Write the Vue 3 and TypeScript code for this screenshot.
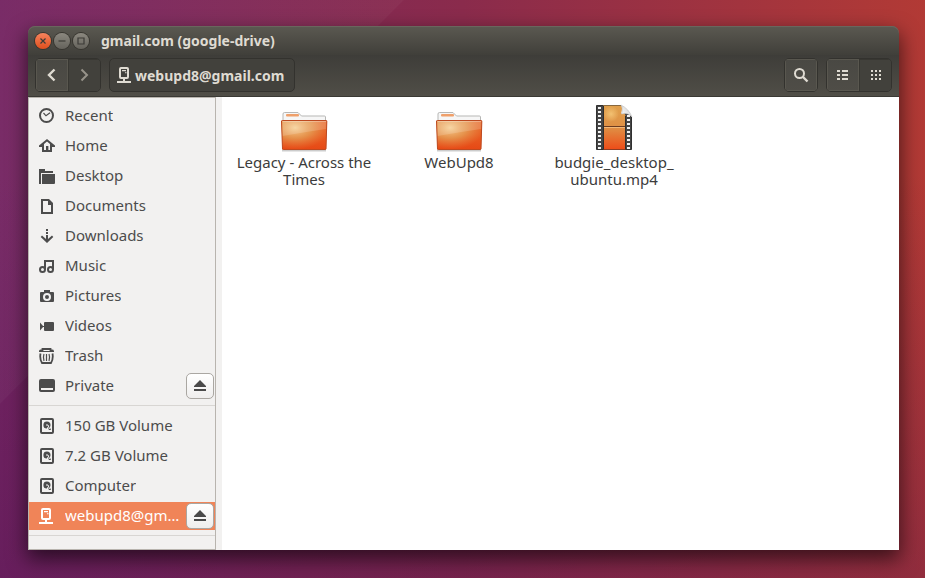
<script setup lang="ts">
import { ref } from 'vue'

interface Place {
  label: string
  icon: string
  ejectable?: boolean
}

interface FileItem {
  name: string
  lines: string[]
  kind: 'folder' | 'video'
}

const bookmarks: Place[] = [
  { label: 'Recent', icon: 'recent' },
  { label: 'Home', icon: 'home' },
  { label: 'Desktop', icon: 'desktop' },
  { label: 'Documents', icon: 'documents' },
  { label: 'Downloads', icon: 'downloads' },
  { label: 'Music', icon: 'music' },
  { label: 'Pictures', icon: 'pictures' },
  { label: 'Videos', icon: 'videos' },
  { label: 'Trash', icon: 'trash' },
  { label: 'Private', icon: 'drive', ejectable: true },
]

const devices: Place[] = [
  { label: '150 GB Volume', icon: 'disk' },
  { label: '7.2 GB Volume', icon: 'disk' },
  { label: 'Computer', icon: 'disk' },
  { label: 'webupd8@gmail.com', icon: 'server', ejectable: true },
]

const groups = [bookmarks, devices]

const files: FileItem[] = [
  { name: 'legacy', lines: ['Legacy - Across the', 'Times'], kind: 'folder' },
  { name: 'webupd8', lines: ['WebUpd8'], kind: 'folder' },
  { name: 'budgie', lines: ['budgie_desktop_', 'ubuntu.mp4'], kind: 'video' },
]

const current = ref('webupd8@gmail.com')
const sprockets = Array.from({ length: 11 }, (_, i) => 3 + i * 4)
</script>

<template>
  <div class="desktop">
    <svg class="symbols" aria-hidden="true">
      <symbol id="recent" viewBox="0 0 16 16">
        <circle cx="7.5" cy="7.5" r="6.5" fill="none" stroke="currentColor" stroke-width="2" />
        <path d="M4.5 5 7 7.8 11 4.8" fill="none" stroke="currentColor" stroke-width="1.2" />
      </symbol>
      <symbol id="home" viewBox="0 0 16 16">
        <path d="M8 1 16 7.5V9H13V14H3V9H0V7.5ZM8 3.600 5 6V12H7V8H9.500V12H11V6Z" fill="currentColor" fill-rule="evenodd" />
        <path d="M7 8H9.500V13H7Z" fill="currentColor" />
        <path d="M5 7H7V12H5ZM9.500 7H11V12H9.500ZM7 6H9.500V8H7Z" fill="#f2f1f0" />
      </symbol>
      <symbol id="desktop" viewBox="0 0 16 16">
        <path d="M0 1H6V3H14V5H2V16H0ZM3 6H16V15Q16 16 15 16H3Z" fill="currentColor" />
      </symbol>
      <symbol id="documents" viewBox="0 0 16 16">
        <path d="M2 1H10L14 5V16H2ZM4 3V14H12V7H9V3Z" fill="currentColor" fill-rule="evenodd" />
      </symbol>
      <symbol id="downloads" viewBox="0 0 16 16">
        <path d="M7 1H9V3H7ZM7 4H9V6H7ZM7 7H9V11L13 7.500 14.300 9 8 15 1.700 9 3 7.500 7 11Z" fill="currentColor" />
      </symbol>
      <symbol id="music" viewBox="0 0 16 16">
        <path d="M6 11.500V3H14V11.500" fill="none" stroke="currentColor" stroke-width="2" />
        <circle cx="3.500" cy="11.500" r="2.500" fill="none" stroke="currentColor" stroke-width="2" />
        <circle cx="11.500" cy="11.500" r="2.500" fill="none" stroke="currentColor" stroke-width="2" />
      </symbol>
      <symbol id="pictures" viewBox="0 0 16 16">
        <path d="M2 4H5V2H11V4H14Q15 4 15 5V13Q15 14 14 14H2Q1 14 1 13V5Q1 4 2 4ZM8 5A4 4 0 0 0 8 13A4 4 0 0 0 8 5ZM8 7A2 2 0 0 1 8 11A2 2 0 0 1 8 7Z" fill="currentColor" fill-rule="evenodd" />
      </symbol>
      <symbol id="videos" viewBox="0 0 16 16">
        <path d="M1 4.500 4.500 8.500 1 12.500ZM5 5Q5 4 6 4H14Q15 4 15 5V12Q15 13 14 13H6Q5 13 5 12V9H4V8H5Z" fill="currentColor" />
      </symbol>
      <symbol id="trash" viewBox="0 0 16 16">
        <path d="M1 4V3Q1 2.500 2 2.500H3.500V1H11.500V2.500H13Q14 2.500 14 3V4M1.500 5.500Q.5 11 3 15H12Q14.500 11 13.500 5.500" fill="none" stroke="currentColor" stroke-width="1.800" />
        <path d="M0 3.500H15M5 6Q3.800 9 5 13M10 6Q11.200 9 10 13M7.500 6V13" fill="none" stroke="currentColor" stroke-width="1.200" />
      </symbol>
      <symbol id="drive" viewBox="0 0 16 16">
        <path d="M2 1H14Q16 1 16 3V12Q16 14 14 14H2Q0 14 0 12V3Q0 1 2 1ZM2 10V12H14V10Z" fill="currentColor" fill-rule="evenodd" />
      </symbol>
      <symbol id="disk" viewBox="0 0 16 16">
        <rect x="2" y="1" width="12" height="14" rx="1" fill="none" stroke="currentColor" stroke-width="2" />
        <path d="M8 3.500A3.500 3.500 0 0 1 11.500 7Q11.500 8.500 10.800 9.200L12 12H10L8.500 8.800 7.800 10.500A3.500 3.500 0 0 1 8 3.500Z" fill="currentColor" />
        <path d="M7 7H9L10.500 11" fill="none" stroke="#f2f1f0" stroke-width="1" />
      </symbol>
      <symbol id="server" viewBox="0 0 16 16">
        <rect x="3" y="1" width="8" height="10" rx="1" fill="none" stroke="currentColor" stroke-width="2" />
        <path d="M5 3H9V4.200H5ZM8 5.200H9.500V6.200H8ZM6 11H8V14H14V16H0V14H6Z" fill="currentColor" />
      </symbol>
      <symbol id="eject" viewBox="0 0 12 12">
        <path d="M6 0 12 6V7H0V6ZM0 9H12V11H0Z" fill="currentColor" />
      </symbol>
      <linearGradient id="folder-front" x1="0" y1="0" x2="0" y2="1">
        <stop offset="0" stop-color="#dd8a48" />
        <stop offset=".5" stop-color="#e06d2c" />
        <stop offset="1" stop-color="#dc4412" />
      </linearGradient>
      <radialGradient id="folder-glow" cx=".3" cy=".25" r=".75">
        <stop offset="0" stop-color="#f6cf94" />
        <stop offset=".5" stop-color="#e8a057" stop-opacity=".7" />
        <stop offset="1" stop-color="#f04d18" stop-opacity=".5" />
      </radialGradient>
      <linearGradient id="film-frame" x1="0" y1="0" x2="0" y2="1">
        <stop offset="0" stop-color="#e0a04c" />
        <stop offset=".5" stop-color="#df9045" />
        <stop offset="1" stop-color="#ee4c18" />
      </linearGradient>
      <radialGradient id="film-glow">
        <stop offset="0" stop-color="#fbd283" stop-opacity=".7" />
        <stop offset="1" stop-color="#fbd283" stop-opacity="0" />
      </radialGradient>
      <linearGradient id="page-curl" x1="0" y1="1" x2="1" y2="0">
        <stop offset="0" stop-color="#ffffff" />
        <stop offset="1" stop-color="#c9c9c9" />
      </linearGradient>
      <symbol id="folder" viewBox="0 0 48 48">
        <path d="M3 18V10Q3 8.500 4.500 8.500H18L21.500 12H44.500Q45.500 12 45.500 13V18" fill="#f6f6f6" stroke="#b7b7b5" />
        <rect x="6" y="10" width="13" height="2.500" rx="1" fill="#efa06b" />
        <path d="M2 46.500H46" stroke="#000000" stroke-opacity=".2" stroke-width="2" />
        <path d="M1.500 17Q1.500 16.500 2.500 16.500H46Q47 16.500 46.800 17.500L46 45Q46 45.500 45 45.500H3.500Q2.500 45.500 2.500 45Z" fill="url(#folder-front)" />
        <path d="M1.500 17Q1.500 16.500 2.500 16.500H46Q47 16.500 46.800 17.500L46 45Q46 45.500 45 45.500H3.500Q2.500 45.500 2.500 45Z" fill="url(#folder-glow)" stroke="#bd4a20" />
        <path d="M2.500 17.500H46L45.800 25Q25 28 2.700 32Z" fill="#ffffff" fill-opacity=".16" />
        <path d="M2.500 17.500H46" stroke="#ffffff" stroke-opacity=".35" />
      </symbol>
      <symbol id="video" viewBox="0 0 48 48">
        <path d="M6.500 1.500H31L41.500 13V45.500H6.500Z" fill="#454545" stroke="#303030" />
        <path d="M13 1.500H31.500L36 13V45.500H13Z" fill="url(#film-frame)" />
        <circle cx="21" cy="10" r="8" fill="url(#film-glow)" />
        <path d="M13 22.500H35" stroke="#6a3b20" stroke-width="1" />
        <path d="M13 23.500H35" stroke="#f3b878" stroke-width="1" />
        <path d="M13.500 2V45.500M35.500 12V45.500" fill="none" stroke="#2e2e2e" />
        <g fill="#f2f2f2">
          <rect v-for="y in sprockets" :key="'l' + y" x="8" :y="y" width="3" height="2" />
          <rect v-for="y in sprockets.slice(2)" :key="'r' + y" x="37" :y="y" width="3" height="2" />
        </g>
        <path d="M31 1Q33 4 31 9.500Q38 7.500 42 13L42.500 0H31Z" fill="#ffffff" />
        <path d="M31 1Q33.500 4 31.500 10Q38 8 42 13Q39 5 31 1Z" fill="url(#page-curl)" stroke="#bcbcbc" stroke-width=".6" />
      </symbol>
    </svg>

    <main class="window">
      <header class="titlebar">
        <div class="controls">
          <button class="control close" aria-label="Close">
            <svg viewBox="0 0 16 16"><path d="M5.500 5.500 10.500 10.500M10.500 5.500 5.500 10.500" /></svg>
          </button>
          <button class="control" aria-label="Minimize">
            <svg viewBox="0 0 16 16"><path d="M4.500 8H11.500" /></svg>
          </button>
          <button class="control" aria-label="Maximize">
            <svg viewBox="0 0 16 16"><path d="M5 5H11V11H5Z" /></svg>
          </button>
        </div>
        <h1 class="title">gmail.com (google-drive)</h1>
      </header>

      <div class="toolbar">
        <div class="group">
          <button class="tool" aria-label="Back">
            <svg class="icon" viewBox="0 0 16 16"><path d="M10.500 2.500 5 8 10.500 13.500" fill="none" stroke="currentColor" stroke-width="2.400" /></svg>
          </button>
          <button class="tool pressed dim" aria-label="Forward">
            <svg class="icon" viewBox="0 0 16 16"><path d="M5.500 2.500 11 8 5.500 13.500" fill="none" stroke="currentColor" stroke-width="2" /></svg>
          </button>
        </div>
        <button class="path">
          <svg class="icon"><use href="#server" /></svg>
          <span>webupd8@gmail.com</span>
        </button>
        <div class="group search">
          <button class="tool" aria-label="Search">
            <svg class="icon" viewBox="0 0 16 16">
              <circle cx="6.500" cy="6.500" r="4.500" fill="none" stroke="currentColor" stroke-width="2" />
              <path d="M10 10 14.500 14.500" stroke="currentColor" stroke-width="2.400" />
            </svg>
          </button>
        </div>
        <div class="group">
          <button class="tool" aria-label="List view">
            <svg class="icon" viewBox="0 0 16 16">
              <path d="M2 3H5V5H2ZM7 3H13V5H7ZM2 7H5V9H2ZM7 7H13V9H7ZM2 11H5V13H2ZM7 11H13V13H7Z" fill="currentColor" />
            </svg>
          </button>
          <button class="tool pressed" aria-label="Icon view">
            <svg class="icon" viewBox="0 0 16 16">
              <path d="M4 3H6V5H4ZM8 3H10V5H8ZM12 3H14V5H12ZM4 7H6V9H4ZM8 7H10V9H8ZM12 7H14V9H12ZM4 11H6V13H4ZM8 11H10V13H8ZM12 11H14V13H12Z" fill="currentColor" />
            </svg>
          </button>
        </div>
      </div>

      <div class="body">
        <nav class="sidebar" aria-label="Places">
          <ul v-for="(group, index) in groups" :key="index" class="places">
            <li v-for="place in group" :key="place.label" class="place" :class="{ selected: place.label === current }">
              <a class="link" href="#" @click.prevent="current = place.label">
                <svg class="icon"><use :href="'#' + place.icon" /></svg>
                <span class="label">{{ place.label }}</span>
              </a>
              <button v-if="place.ejectable" class="eject" :aria-label="'Eject ' + place.label">
                <svg><use href="#eject" /></svg>
              </button>
            </li>
          </ul>
        </nav>
        <section class="files" aria-label="Files">
          <a v-for="file in files" :key="file.name" class="file" href="#" @click.prevent>
            <svg class="thumb"><use :href="'#' + file.kind" /></svg>
            <span v-for="line in file.lines" :key="line" class="line">{{ line }}</span>
          </a>
        </section>
      </div>
    </main>
  </div>
</template>

<style>
body {
  margin: 0;
}
</style>

<style scoped>
.desktop {
  box-sizing: border-box;
  display: flex;
  min-height: 100vh;
  padding: 26px 26px 28px 28px;
  background:
    linear-gradient(135deg, rgba(255, 255, 255, 0.03) 285px, transparent 286px),
    linear-gradient(to bottom, transparent 30%, rgba(70, 14, 80, 0.3)),
    linear-gradient(to right, #752562, #8a2b4c 50%, #b23a35);
  font-family: "Noto Sans", sans-serif;
  font-size: 15px;
  color: #3c3c3c;
}

.symbols {
  position: absolute;
  width: 0;
  height: 0;
}

.window {
  flex: 1;
  min-width: 0;
  display: flex;
  flex-direction: column;
  border-radius: 7px 7px 0 0;
  box-shadow: 0 8px 20px 1px rgba(0, 0, 0, 0.6);
}

button {
  margin: 0;
  padding: 0;
  border: 0;
  font: inherit;
  color: inherit;
}

a {
  color: inherit;
  text-decoration: none;
}

.icon {
  flex: none;
  display: block;
  width: 16px;
  height: 16px;
}

.titlebar {
  display: flex;
  align-items: center;
  gap: 12px;
  height: 29px;
  padding: 0 7px;
  border-radius: 7px 7px 0 0;
  background: linear-gradient(#5b5951, #403f3a);
  box-shadow: inset 0 1px #69665d;
  color: #dfdbd2;
}

.controls {
  display: flex;
  gap: 3px;
}

.control {
  width: 16px;
  height: 16px;
  border-radius: 50%;
  background: linear-gradient(#8b887f, #65635c);
  box-shadow: 0 0 0 1px #37352f;
}

.control svg {
  display: block;
  fill: none;
  stroke: #3c3b37;
  stroke-width: 1.2;
}

.close {
  background: linear-gradient(#f5835d, #df4f1d);
}

.title {
  margin: 0;
  font-size: 14px;
  font-weight: 700;
  line-height: 20px;
}

.toolbar {
  display: flex;
  align-items: center;
  gap: 8px;
  height: 40px;
  padding: 0 7px 1px;
  border-bottom: 1px solid #3a3934;
  background: linear-gradient(#3e3d39, #504e47);
  color: #dfdbd2;
}

.group,
.path {
  border: 1px solid #33322e;
  border-radius: 5px;
}

.group {
  display: flex;
  overflow: hidden;
}

.tool {
  display: grid;
  place-items: center;
  width: 32px;
  height: 32px;
  background: linear-gradient(#494843, #4f4d47);
  box-shadow: inset 0 0 0 1px #59574f;
}

.pressed {
  background: #42413c;
  box-shadow: inset 1px 1px #383732;
}

.dim {
  color: #97938a;
}

.path {
  display: flex;
  align-items: center;
  gap: 2px;
  height: 34px;
  padding: 0 10px 0 7px;
  background: #42413c;
  font-size: 14px;
  font-weight: 700;
}

.search {
  margin-left: auto;
}

.body {
  flex: 1;
  display: flex;
  background: #f2f1f0;
}

.sidebar {
  box-sizing: border-box;
  flex: none;
  width: 188px;
  margin-right: 6px;
  border: 1px solid #b8b4ae;
}

.places {
  display: flex;
  flex-direction: column;
  gap: 2px;
  margin: 0;
  padding: 4px 0 5px;
  border-bottom: 1px solid #d8d6d3;
  list-style: none;
}

.places + .places {
  padding-top: 6px;
}

.place {
  display: flex;
  align-items: center;
  height: 28px;
  padding-right: 1px;
  color: #4c4c4c;
}

.link {
  flex: 1;
  min-width: 0;
  display: flex;
  align-items: center;
  gap: 10px;
  padding: 0 6px 0 10px;
}

.label {
  overflow: hidden;
  text-overflow: ellipsis;
  white-space: nowrap;
  padding-bottom: 2px;
  line-height: 26px;
}

.selected {
  background: #f08458;
  color: #ffffff;
}

.eject {
  flex: none;
  display: grid;
  place-items: center;
  width: 28px;
  height: 26px;
  border: 1px solid #aaa7a2;
  border-radius: 5px;
  background: linear-gradient(#ffffff, #efeeed);
  color: #4a4a4a;
}

.eject svg {
  width: 12px;
  height: 12px;
}

.files {
  flex: 1;
  display: grid;
  grid-template-columns: repeat(auto-fill, 154px);
  column-gap: 1px;
  align-content: start;
  padding: 7px 5px;
  background: #ffffff;
}

.file {
  display: flex;
  flex-direction: column;
  align-items: center;
}

.thumb {
  width: 48px;
  height: 48px;
  margin-bottom: 2px;
}

.line {
  line-height: 17px;
  white-space: nowrap;
}
</style>
